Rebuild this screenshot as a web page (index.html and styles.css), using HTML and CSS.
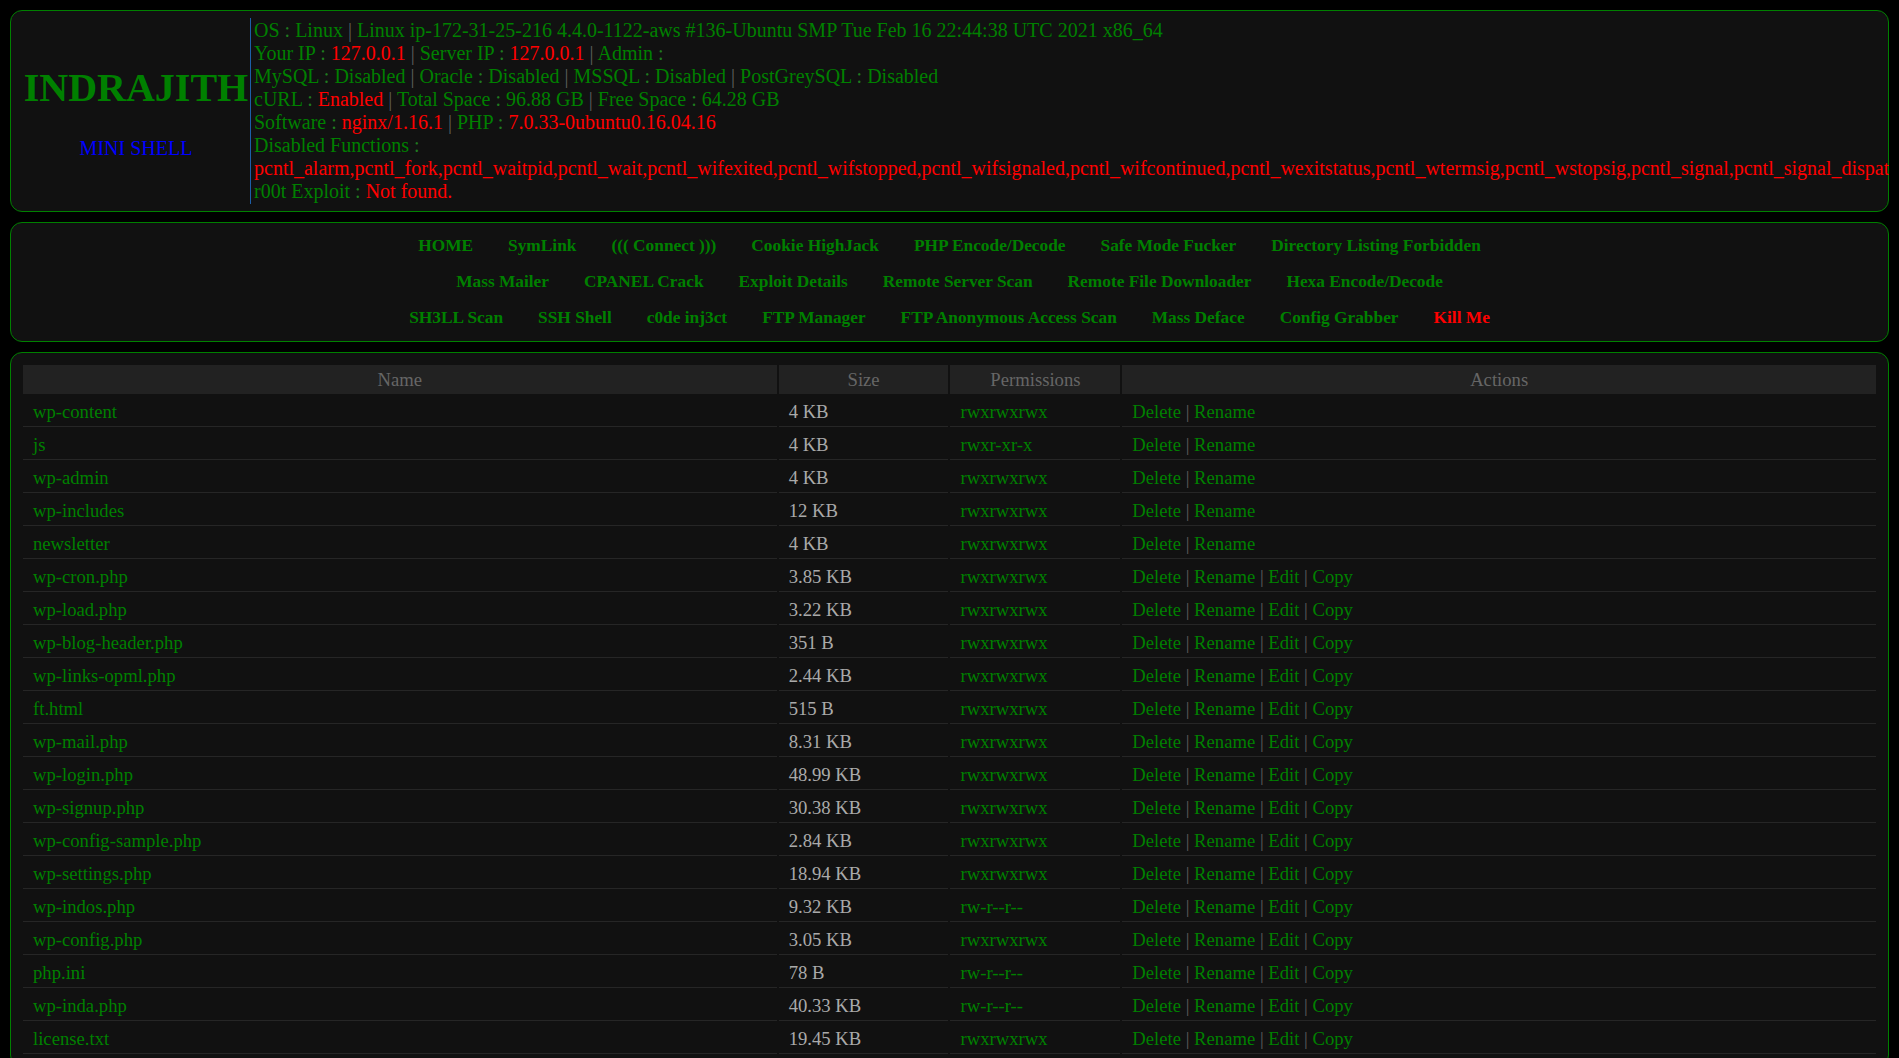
FILE: index.html
```html
<!DOCTYPE html>
<html lang="en">
<head>
<meta charset="utf-8">
<title>INDRAJITH MINI SHELL</title>
<link rel="stylesheet" href="styles.css">
</head>
<body>
<div class="panel head">
  <div class="brand">
    <h1 class="brand-title">INDRAJITH</h1>
    <div class="brand-sub">MINI SHELL</div>
  </div>
  <div class="sysinfo">
    <div>OS <span class="dim">:</span> Linux <span class="pipe">|</span> Linux ip-172-31-25-216 4.4.0-1122-aws #136-Ubuntu SMP Tue Feb 16 22:44:38 UTC 2021 x86_64</div>
    <div>Your IP <span class="dim">:</span> <span class="red">127.0.0.1</span> <span class="pipe">|</span> Server IP <span class="dim">:</span> <span class="red">127.0.0.1</span> <span class="pipe">|</span> Admin <span class="dim">:</span></div>
    <div>MySQL <span class="dim">:</span> Disabled <span class="pipe">|</span> Oracle <span class="dim">:</span> Disabled <span class="pipe">|</span> MSSQL <span class="dim">:</span> Disabled <span class="pipe">|</span> PostGreySQL <span class="dim">:</span> Disabled</div>
    <div>cURL <span class="dim">:</span> <span class="red">Enabled</span> <span class="pipe">|</span> Total Space <span class="dim">:</span> 96.88 GB <span class="pipe">|</span> Free Space <span class="dim">:</span> 64.28 GB</div>
    <div>Software <span class="dim">:</span> <span class="red">nginx/1.16.1</span> <span class="pipe">|</span> PHP <span class="dim">:</span> <span class="red">7.0.33-0ubuntu0.16.04.16</span></div>
    <div>Disabled Functions <span class="dim">:</span></div>
    <div class="red">pcntl_alarm,pcntl_fork,pcntl_waitpid,pcntl_wait,pcntl_wifexited,pcntl_wifstopped,pcntl_wifsignaled,pcntl_wifcontinued,pcntl_wexitstatus,pcntl_wtermsig,pcntl_wstopsig,pcntl_signal,pcntl_signal_dispatch,pcntl_get_last_error,pcntl_strerror,pcntl_sigprocmask,pcntl_sigwaitinfo,pcntl_sigtimedwait,pcntl_exec,pcntl_getpriority,pcntl_setpriority,</div>
    <div>r00t Exploit <span class="dim">:</span> <span class="red">Not found.</span></div>
  </div>
</div>

<div class="panel nav">
  <div class="nav-row">
    <a class="nav-link">HOME</a>
    <a class="nav-link">SymLink</a>
    <a class="nav-link">((( Connect )))</a>
    <a class="nav-link">Cookie HighJack</a>
    <a class="nav-link">PHP Encode/Decode</a>
    <a class="nav-link">Safe Mode Fucker</a>
    <a class="nav-link">Directory Listing Forbidden</a>
  </div>
  <div class="nav-row">
    <a class="nav-link">Mass Mailer</a>
    <a class="nav-link">CPANEL Crack</a>
    <a class="nav-link">Exploit Details</a>
    <a class="nav-link">Remote Server Scan</a>
    <a class="nav-link">Remote File Downloader</a>
    <a class="nav-link">Hexa Encode/Decode</a>
  </div>
  <div class="nav-row">
    <a class="nav-link">SH3LL Scan</a>
    <a class="nav-link">SSH Shell</a>
    <a class="nav-link">c0de inj3ct</a>
    <a class="nav-link">FTP Manager</a>
    <a class="nav-link">FTP Anonymous Access Scan</a>
    <a class="nav-link">Mass Deface</a>
    <a class="nav-link">Config Grabber</a>
    <a class="nav-link nav-kill">Kill Me</a>
  </div>
</div>

<div class="panel files">
  <table class="file-table">
    <colgroup>
      <col class="col-name"><col class="col-size"><col class="col-perm"><col class="col-act">
    </colgroup>
    <thead>
      <tr><th>Name</th><th>Size</th><th>Permissions</th><th>Actions</th></tr>
    </thead>
    <tbody>
      <tr><td class="g">wp-content</td><td class="size">4 KB</td><td class="g">rwxrwxrwx</td><td class="g">Delete <span class="pipe">|</span> Rename</td></tr>
      <tr><td class="g">js</td><td class="size">4 KB</td><td class="g">rwxr-xr-x</td><td class="g">Delete <span class="pipe">|</span> Rename</td></tr>
      <tr><td class="g">wp-admin</td><td class="size">4 KB</td><td class="g">rwxrwxrwx</td><td class="g">Delete <span class="pipe">|</span> Rename</td></tr>
      <tr><td class="g">wp-includes</td><td class="size">12 KB</td><td class="g">rwxrwxrwx</td><td class="g">Delete <span class="pipe">|</span> Rename</td></tr>
      <tr><td class="g">newsletter</td><td class="size">4 KB</td><td class="g">rwxrwxrwx</td><td class="g">Delete <span class="pipe">|</span> Rename</td></tr>
      <tr><td class="g">wp-cron.php</td><td class="size">3.85 KB</td><td class="g">rwxrwxrwx</td><td class="g">Delete <span class="pipe">|</span> Rename <span class="pipe">|</span> Edit <span class="pipe">|</span> Copy</td></tr>
      <tr><td class="g">wp-load.php</td><td class="size">3.22 KB</td><td class="g">rwxrwxrwx</td><td class="g">Delete <span class="pipe">|</span> Rename <span class="pipe">|</span> Edit <span class="pipe">|</span> Copy</td></tr>
      <tr><td class="g">wp-blog-header.php</td><td class="size">351 B</td><td class="g">rwxrwxrwx</td><td class="g">Delete <span class="pipe">|</span> Rename <span class="pipe">|</span> Edit <span class="pipe">|</span> Copy</td></tr>
      <tr><td class="g">wp-links-opml.php</td><td class="size">2.44 KB</td><td class="g">rwxrwxrwx</td><td class="g">Delete <span class="pipe">|</span> Rename <span class="pipe">|</span> Edit <span class="pipe">|</span> Copy</td></tr>
      <tr><td class="g">ft.html</td><td class="size">515 B</td><td class="g">rwxrwxrwx</td><td class="g">Delete <span class="pipe">|</span> Rename <span class="pipe">|</span> Edit <span class="pipe">|</span> Copy</td></tr>
      <tr><td class="g">wp-mail.php</td><td class="size">8.31 KB</td><td class="g">rwxrwxrwx</td><td class="g">Delete <span class="pipe">|</span> Rename <span class="pipe">|</span> Edit <span class="pipe">|</span> Copy</td></tr>
      <tr><td class="g">wp-login.php</td><td class="size">48.99 KB</td><td class="g">rwxrwxrwx</td><td class="g">Delete <span class="pipe">|</span> Rename <span class="pipe">|</span> Edit <span class="pipe">|</span> Copy</td></tr>
      <tr><td class="g">wp-signup.php</td><td class="size">30.38 KB</td><td class="g">rwxrwxrwx</td><td class="g">Delete <span class="pipe">|</span> Rename <span class="pipe">|</span> Edit <span class="pipe">|</span> Copy</td></tr>
      <tr><td class="g">wp-config-sample.php</td><td class="size">2.84 KB</td><td class="g">rwxrwxrwx</td><td class="g">Delete <span class="pipe">|</span> Rename <span class="pipe">|</span> Edit <span class="pipe">|</span> Copy</td></tr>
      <tr><td class="g">wp-settings.php</td><td class="size">18.94 KB</td><td class="g">rwxrwxrwx</td><td class="g">Delete <span class="pipe">|</span> Rename <span class="pipe">|</span> Edit <span class="pipe">|</span> Copy</td></tr>
      <tr><td class="g">wp-indos.php</td><td class="size">9.32 KB</td><td class="g">rw-r--r--</td><td class="g">Delete <span class="pipe">|</span> Rename <span class="pipe">|</span> Edit <span class="pipe">|</span> Copy</td></tr>
      <tr><td class="g">wp-config.php</td><td class="size">3.05 KB</td><td class="g">rwxrwxrwx</td><td class="g">Delete <span class="pipe">|</span> Rename <span class="pipe">|</span> Edit <span class="pipe">|</span> Copy</td></tr>
      <tr><td class="g">php.ini</td><td class="size">78 B</td><td class="g">rw-r--r--</td><td class="g">Delete <span class="pipe">|</span> Rename <span class="pipe">|</span> Edit <span class="pipe">|</span> Copy</td></tr>
      <tr><td class="g">wp-inda.php</td><td class="size">40.33 KB</td><td class="g">rw-r--r--</td><td class="g">Delete <span class="pipe">|</span> Rename <span class="pipe">|</span> Edit <span class="pipe">|</span> Copy</td></tr>
      <tr><td class="g">license.txt</td><td class="size">19.45 KB</td><td class="g">rwxrwxrwx</td><td class="g">Delete <span class="pipe">|</span> Rename <span class="pipe">|</span> Edit <span class="pipe">|</span> Copy</td></tr>
    </tbody>
  </table>
</div>
</body>
</html>
```

FILE: styles.css
```css
html {
  scrollbar-width: none;
}
html::-webkit-scrollbar {
  display: none;
}
body {
  margin: 10px;
  background: #000;
  color: #008000;
  font-family: "Liberation Serif", "Times New Roman", serif;
  overflow-x: hidden;
}

.panel {
  background: #111;
  border: 1px solid #008000;
  border-radius: 12px;
  margin-bottom: 10px;
}

/* header */
.head {
  display: flex;
  padding: 7px;
}
.brand {
  flex: 0 0 232px;
  box-sizing: border-box;
  padding: 2px 0 0 4px;
  display: flex;
  flex-direction: column;
  align-items: center;
  justify-content: center;
  gap: 26px;
}
.brand-title {
  margin: 0;
  font-size: 40px;
  font-weight: bold;
  line-height: 46px;
  color: #008000;
}
.brand-sub {
  font-size: 20px;
  line-height: 23px;
  color: #0000ff;
}
.sysinfo {
  border-left: 1px solid #1d5ea8;
  padding: 1px 0 1px 3px;
  font-size: 20px;
  line-height: 23px;
  white-space: nowrap;
}
.red { color: #ff0000; }
.dim { color: #1f7a1f; }
.pipe { color: #5e5e5e; }

/* nav */
.nav {
  padding: 5px 0 5px;
}
.nav-row {
  display: flex;
  justify-content: center;
  gap: 35px;
  line-height: 36px;
  font-size: 17.33px;
  font-weight: bold;
}
.nav-link {
  color: #008000;
  cursor: pointer;
}
.nav-kill {
  color: #ff0000;
}

/* file table */
.files {
  padding: 12px 10px 12px;
}
.file-table {
  width: 100%;
  table-layout: fixed;
  border-collapse: separate;
  border-spacing: 2px 0;
  font-size: 18.67px;
  line-height: 22px;
}
.col-name { width: 40.6%; }
.col-size { width: 9.15%; }
.col-perm { width: 9.15%; }
.col-act { width: 40.6%; }
.file-table th {
  background: #222;
  color: #666;
  font-weight: normal;
  padding: 4px 10px 3px;
  text-align: center;
}
.file-table td {
  padding: 7px 10px 3px;
  border-bottom: 1px solid #262626;
  text-align: left;
  white-space: nowrap;
}
.file-table td.g { color: #008000; }
.file-table td.size { color: #aaa; }
```
